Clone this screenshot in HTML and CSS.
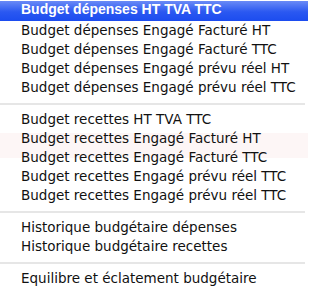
FILE: index.html
```html
<!DOCTYPE html>
<html lang="fr">
<head>
<meta charset="utf-8">
<title>Menu budget</title>
<link rel="stylesheet" href="styles.css">
</head>
<body>
<ul class="menu">
    <li class="item selected">Budget dépenses HT TVA TTC</li>
    <li class="item">Budget dépenses Engagé Facturé HT</li>
    <li class="item">Budget dépenses Engagé Facturé TTC</li>
    <li class="item">Budget dépenses Engagé prévu réel HT</li>
    <li class="item">Budget dépenses Engagé prévu réel TTC</li>
    <li class="sep"></li>
    <li class="item">Budget recettes HT TVA TTC</li>
    <li class="item">Budget recettes Engagé Facturé HT</li>
    <li class="item">Budget recettes Engagé Facturé TTC</li>
    <li class="item">Budget recettes Engagé prévu réel TTC</li>
    <li class="item">Budget recettes Engagé prévu réel TTC</li>
    <li class="sep"></li>
    <li class="item">Historique budgétaire dépenses</li>
    <li class="item">Historique budgétaire recettes</li>
    <li class="sep"></li>
    <li class="item">Equilibre et éclatement budgétaire</li>
</ul>
</body>
</html>
```
FILE: styles.css
```css
body {
    margin: 0;
    padding: 0;
    background: #fff;
    font: 13.5px "DejaVu Sans", Verdana, sans-serif;
    color: #111;
}

/* le fond laisse deviner une bande rosée derrière le menu */
.menu {
    list-style: none;
    margin: 0;
    padding: 1px 0 0 0;
    width: 308px;
    background: linear-gradient(#fff 133px, #fdf6f6 133px, #fdf6f6 158px, #fff 158px);
}

.item {
    height: 19px;
    line-height: 19px;
    padding-left: 21px;
    white-space: nowrap;
}

.selected {
    height: 20px;
    line-height: 21px;
    color: #fff;
    font: bold 14px "Liberation Sans", Arial, sans-serif;
    background: linear-gradient(#6a8af6, #2a58f1 55%, #1c4cef);
}

.sep {
    height: 13px;
    box-sizing: border-box;
    padding: 6px 3px 0 0;
}

.sep::after {
    content: "";
    display: block;
    height: 2px;
    background: #e6e6e6;
}
```
